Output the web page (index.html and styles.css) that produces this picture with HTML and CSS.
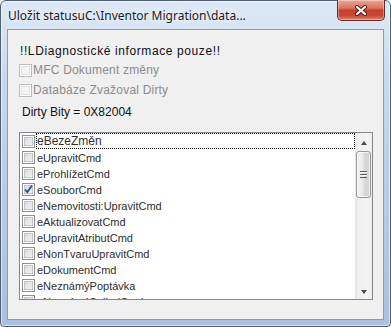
FILE: index.html
```html
<!DOCTYPE html>
<html lang="cs">

<head>
    <meta charset="utf-8">
    <title>Uložit status</title>
    <link rel="stylesheet" href="styles.css">
</head>

<body>
    <div class="window">
        <div class="titlebar">
            <span class="caption">Uložit statusuC:\Inventor Migration\data...</span>
            <button class="close" aria-label="Zavřít">
                <svg width="14" height="11" viewBox="0 0 14 11">
                    <path d="M3 2 L11 9 M11 2 L3 9" stroke="#3b1f1c" stroke-width="4" stroke-linecap="round" />
                    <path d="M3 2 L11 9 M11 2 L3 9" stroke="#fff" stroke-width="2.2" stroke-linecap="round" />
                </svg>
            </button>
        </div>

        <div class="client">
            <p class="note">!!LDiagnostické informace pouze!!</p>
            <div class="check disabled"><span class="box"></span>MFC Dokument změny</div>
            <div class="check disabled second"><span class="box"></span>Databáze Zvažoval Dirty</div>
            <p class="bits">Dirty Bity = 0X82004</p>

            <div class="listbox">
                <ul class="items">
                    <li class="item"><span class="box"></span><span class="label focus">eBezeZměn</span></li>
                    <li class="item"><span class="box"></span><span class="label">eUpravitCmd</span></li>
                    <li class="item"><span class="box"></span><span class="label">eProhlížetCmd</span></li>
                    <li class="item"><span class="box checked">
                            <svg width="11" height="11" viewBox="0 0 11 11">
                                <path d="M2 5.5 L4.3 8 L9 1.5" fill="none" stroke="#2a4aa8" stroke-width="1.8" />
                            </svg>
                        </span><span class="label">eSouborCmd</span></li>
                    <li class="item"><span class="box"></span><span class="label">eNemovitosti:UpravitCmd</span></li>
                    <li class="item"><span class="box"></span><span class="label">eAktualizovatCmd</span></li>
                    <li class="item"><span class="box"></span><span class="label">eUpravitAtributCmd</span></li>
                    <li class="item"><span class="box"></span><span class="label">eNonTvaruUpravitCmd</span></li>
                    <li class="item"><span class="box"></span><span class="label">eDokumentCmd</span></li>
                    <li class="item"><span class="box"></span><span class="label">eNeznámýPoptávka</span></li>
                    <li class="item"><span class="box"></span><span class="label">eNeznámýSelhalCmd</span></li>
                </ul>

                <div class="scrollbar">
                    <div class="arrow up"></div>
                    <div class="thumb"><span class="grip"></span></div>
                    <div class="track"></div>
                    <div class="arrow down"></div>
                </div>
            </div>
        </div>
    </div>
</body>

</html>
```

FILE: styles.css
```css
body {
    margin: 0;
    padding: 0;
    background-color: #fff;
}

.window {
    width: 391px;
    height: 327px;
    box-sizing: border-box;
    display: flex;
    flex-direction: column;
    padding: 0 6px 6px;
    border: 1px solid #4e5f75;
    border-radius: 6px 6px 4px 4px;
    background: linear-gradient(#dde9f6, #c6d8ed 25%, #b7cce6 60%, #a9c1df);
    box-shadow: inset 0 0 0 1px rgba(255, 255, 255, 0.55);
}

.titlebar {
    height: 28px;
    display: flex;
    align-items: flex-start;
}

.caption {
    margin-left: 1px;
    padding-top: 7px;
    line-height: 16px;
    font-family: "Noto Sans", sans-serif;
    font-size: 12px;
    color: #1b1b1b;
    white-space: nowrap;
    text-shadow: 0 0 6px #fff, 0 0 10px rgba(255, 255, 255, 0.8);
}

.close {
    margin: -1px -1px 0 auto;
    width: 48px;
    height: 21px;
    padding: 0;
    display: flex;
    align-items: center;
    justify-content: center;
    border: 1px solid #6a2a22;
    border-top: none;
    border-radius: 0 0 5px 5px;
    background: linear-gradient(#eaa894, #d9745f 40%, #c5412c 52%, #c84a35 80%, #dc8a6e);
    box-shadow: inset 0 0 0 1px rgba(255, 255, 255, 0.35);
}

.client {
    flex: 1;
    display: flex;
    flex-direction: column;
    padding-left: 11px;
    border: 1px solid #8a9cb3;
    background-color: #f0f0f0;
    font-family: "Liberation Sans", Arial, sans-serif;
    font-size: 12px;
    color: #111;
}

.note {
    margin: 14px 0 0 1px;
    line-height: 15px;
    letter-spacing: 0.6px;
}

.check {
    display: flex;
    align-items: center;
    height: 13px;
    margin-top: 5px;
    line-height: 13px;
    letter-spacing: 0.2px;
}

.check.second {
    margin-top: 7px;
}

.check.disabled {
    color: #8b8b8b;
}

.check .box {
    margin-right: 1px;
}

.bits {
    margin: 8px 0 0 3px;
    line-height: 14px;
}

/* checkbox square */
.box {
    flex: none;
    width: 13px;
    height: 13px;
    box-sizing: border-box;
    display: flex;
    align-items: center;
    justify-content: center;
    border: 1px solid #8e8f8f;
    background: linear-gradient(135deg, #d2d5d8, #f8f8f8);
    box-shadow: inset 0 0 0 1px #fff, inset 0 0 0 2px #c2c6ca;
}

.disabled .box {
    border-color: #bcbcbc;
    background: #f4f4f4;
    box-shadow: inset 0 0 0 1px #fff, inset 0 0 0 2px #e2e2e2;
}

.listbox {
    width: 354px;
    height: 168px;
    box-sizing: border-box;
    margin-top: 13px;
    display: flex;
    border: 1px solid #828790;
    background-color: #fff;
    overflow: hidden;
}

.items {
    flex: 1;
    margin: 0;
    padding: 0;
    list-style: none;
    font-size: 11px;
    color: #2e2e2e;
}

.item {
    display: flex;
    align-items: center;
    height: 16px;
    padding-left: 2px;
}

.label {
    flex: 1;
    height: 16px;
    box-sizing: border-box;
    margin-left: 1px;
    padding-left: 1px;
    line-height: 16px;
    border: 1px solid transparent;
    border-left: none;
}

.label.focus {
    margin-left: 1px;
    padding-left: 0;
    line-height: 14px;
    border: 1px dotted #000;
    font-size: 12px;
}

.scrollbar {
    width: 17px;
    display: flex;
    flex-direction: column;
    background: linear-gradient(90deg, #e6e6e6, #f0f0f0 25%, #f4f4f4 75%, #ececec);
}

.arrow {
    height: 17px;
    display: flex;
    align-items: center;
    justify-content: center;
}

.arrow::before {
    content: "";
    border-left: 3.5px solid transparent;
    border-right: 3.5px solid transparent;
}

.arrow.up::before {
    margin-top: 3px;
    border-bottom: 4px solid #4a4a4a;
}

.arrow.down::before {
    margin-top: 2px;
    border-top: 4px solid #4a4a4a;
}

.thumb {
    height: 47px;
    margin: 1px 1px 0;
    box-sizing: border-box;
    display: flex;
    align-items: center;
    justify-content: center;
    border: 1px solid #989898;
    border-radius: 3px;
    background: linear-gradient(90deg, #f4f4f4, #e9e9e9 45%, #d9d9d9 55%, #d2d2d2);
    box-shadow: inset 0 0 0 1px rgba(255, 255, 255, 0.7);
}

.grip {
    width: 7px;
    height: 7px;
    background: repeating-linear-gradient(#5b5b5b 0 1px, #f6f6f6 1px 2px, transparent 2px 3px);
}

.track {
    flex: 1;
}
```
